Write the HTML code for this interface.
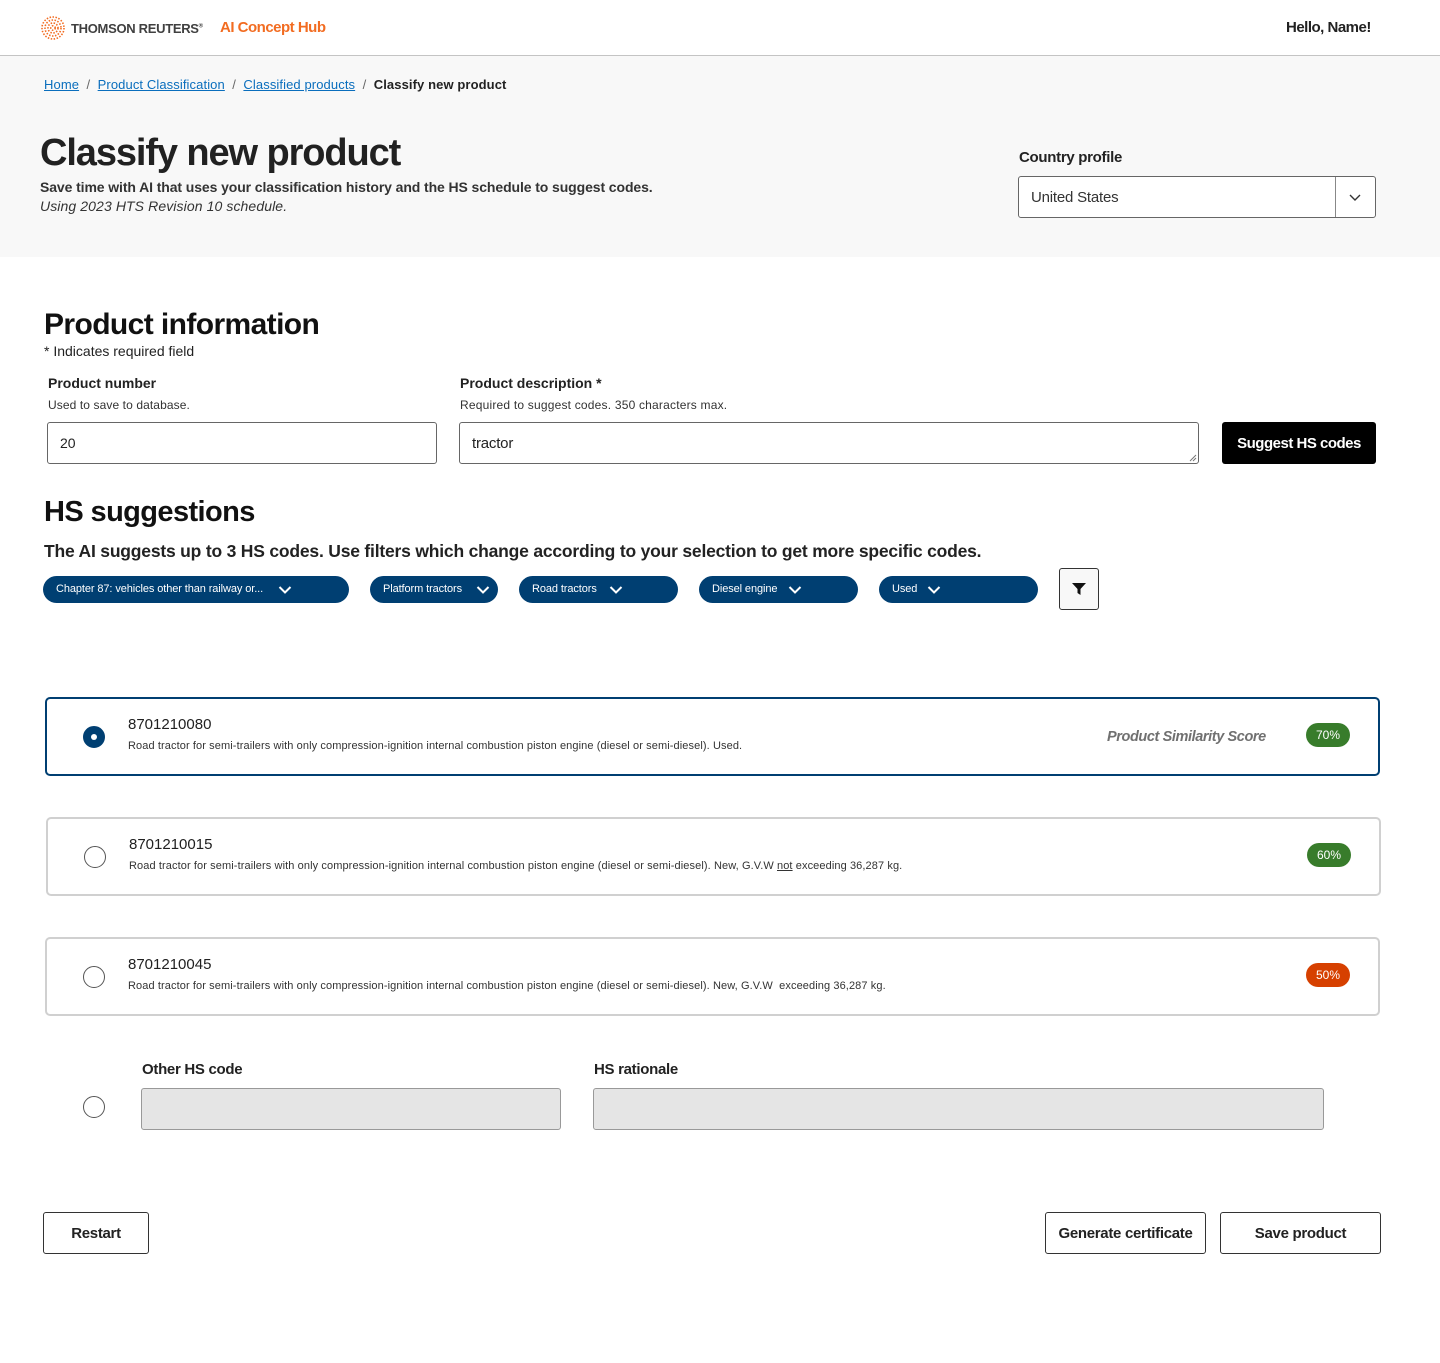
<!DOCTYPE html>
<html><head><meta charset="utf-8"><style>
*{box-sizing:border-box;margin:0;padding:0}
body{width:1440px;height:1363px;position:relative;background:#fff;font-family:"Liberation Sans",sans-serif;color:#212121;overflow:hidden}
.a{position:absolute;white-space:nowrap}
a{color:#0a6ebd;text-decoration:underline}
.pill{position:absolute;top:576px;height:27px;background:#003f72;border-radius:14px;color:#fff;font-size:11px;padding:7px 0 0 13px;letter-spacing:-0.1px}
.pill svg{position:absolute;top:9px}
.card{position:absolute;left:45px;width:1335px;height:79px;border:2px solid #d0d0d0;border-radius:5px;background:#fff}
.radio{position:absolute;width:22px;height:22px;border:1px solid #555;border-radius:50%;background:#fff}
.code{position:absolute;left:81px;top:17px;font-size:15px;color:#212121}
.desc{position:absolute;left:81px;top:41px;font-size:11px;color:#333;letter-spacing:0.1px}
.badge{position:absolute;top:24px;width:44px;height:24px;border-radius:12px;color:#fff;font-size:12px;text-align:center;line-height:24px}
.btn{position:absolute;height:42px;border:1px solid #333;border-radius:3px;background:#fff;font-size:15px;font-weight:bold;text-align:center;line-height:41px;color:#222;letter-spacing:-0.3px}
</style></head><body>
<div class="a" style="left:0;top:0;width:1440px;height:56px;border-bottom:1px solid #c4c4c4;background:#fff"></div>
<svg class="a" style="left:40px;top:16px" width="26" height="24" viewBox="0 0 26 24">
<g fill="none" stroke="#f26c21" stroke-width="1.6" stroke-dasharray="1.5 1.5">
<circle cx="13" cy="12" r="11"/><circle cx="13" cy="12" r="8"/><circle cx="13" cy="12" r="5"/><circle cx="13" cy="12" r="2.2"/></g></svg>
<div class="a" style="left:71px;top:21px;font-size:13px;font-weight:bold;color:#404040;letter-spacing:-0.3px">THOMSON REUTERS<sup style="font-size:6px">®</sup></div>
<div class="a" style="left:220px;top:19px;font-size:15px;font-weight:bold;color:#f26c21;letter-spacing:-0.5px">AI Concept Hub</div>
<div class="a" style="left:1286px;top:19px;font-size:15px;font-weight:bold;color:#222;letter-spacing:-0.5px">Hello, Name!</div>
<div class="a" style="left:0;top:56px;width:1440px;height:201px;background:#f8f8f8"></div>
<div class="a" style="left:44px;top:77px;font-size:13px;color:#666;letter-spacing:0.1px"><a>Home</a> &nbsp;/&nbsp; <a>Product Classification</a> &nbsp;/&nbsp; <a>Classified products</a> &nbsp;/&nbsp; <span style="color:#222;font-weight:bold">Classify new product</span></div>
<div class="a" style="left:40px;top:132px;font-size:38px;font-weight:bold;color:#212121;letter-spacing:-1.1px">Classify new product</div>
<div class="a" style="left:40px;top:179px;font-size:14px;font-weight:bold;color:#333;letter-spacing:-0.1px">Save time with AI that uses your classification history and the HS schedule to suggest codes.</div>
<div class="a" style="left:40px;top:198px;font-size:14px;font-style:italic;color:#333;letter-spacing:0.1px">Using 2023 HTS Revision 10 schedule.</div>
<div class="a" style="left:1019px;top:149px;font-size:15px;font-weight:bold;color:#222;letter-spacing:-0.3px">Country profile</div>
<div class="a" style="left:1018px;top:176px;width:358px;height:42px;border:1px solid #666;border-radius:3px;background:#fff"></div>
<div class="a" style="left:1335px;top:177px;width:1px;height:40px;background:#888"></div>
<div class="a" style="left:1031px;top:189px;font-size:15px;color:#333;letter-spacing:-0.2px">United States</div>
<svg class="a" style="left:1349px;top:192px" width="12" height="10"><path d="M1 3l5 5 5-5" fill="none" stroke="#333" stroke-width="1.4"/></svg>
<div class="a" style="left:44px;top:308px;font-size:30px;font-weight:bold;color:#111;letter-spacing:-0.6px">Product information</div>
<div class="a" style="left:44px;top:343px;font-size:14px;color:#222;letter-spacing:0px">* Indicates required field</div>
<div class="a" style="left:48px;top:375px;font-size:14px;font-weight:bold;color:#222;letter-spacing:0px">Product number</div>
<div class="a" style="left:48px;top:398px;font-size:12px;color:#333;letter-spacing:0.1px">Used to save to database.</div>
<div class="a" style="left:47px;top:422px;width:390px;height:42px;border:1px solid #666;border-radius:3px"></div>
<div class="a" style="left:60px;top:435px;font-size:14px;color:#222">20</div>
<div class="a" style="left:460px;top:375px;font-size:14px;font-weight:bold;color:#222;letter-spacing:0px">Product description *</div>
<div class="a" style="left:460px;top:398px;font-size:12px;color:#333;letter-spacing:0.2px">Required to suggest codes. 350 characters max.</div>
<div class="a" style="left:459px;top:422px;width:740px;height:42px;border:1px solid #666;border-radius:3px"></div>
<svg class="a" style="left:1189px;top:454px" width="8" height="8"><path d="M7 1L1 7M7 4L4 7" stroke="#777" stroke-width="1"/></svg>
<div class="a" style="left:472px;top:435px;font-size:15px;color:#222;letter-spacing:-0.2px">tractor</div>
<div class="a" style="left:1222px;top:422px;width:154px;height:42px;background:#000;border-radius:3px;color:#fff;font-size:15px;font-weight:bold;text-align:center;line-height:43px;letter-spacing:-0.5px">Suggest HS codes</div>
<div class="a" style="left:44px;top:496px;font-size:29px;font-weight:bold;color:#111;letter-spacing:-0.6px">HS suggestions</div>
<div class="a" style="left:44px;top:541px;font-size:17.5px;font-weight:bold;color:#222;letter-spacing:-0.2px">The AI suggests up to 3 HS codes. Use filters which change according to your selection to get more specific codes.</div>
<div class="pill" style="left:43px;width:306px">Chapter 87: vehicles other than railway or...<svg style="left:235px" width="14" height="10"><path d="M1.5 2l5.5 5.5 5.5-5.5" fill="none" stroke="#fff" stroke-width="2"/></svg></div>
<div class="pill" style="left:370px;width:128px">Platform tractors<svg style="left:106px" width="14" height="10"><path d="M1.5 2l5.5 5.5 5.5-5.5" fill="none" stroke="#fff" stroke-width="2"/></svg></div>
<div class="pill" style="left:519px;width:159px">Road tractors<svg style="left:90px" width="14" height="10"><path d="M1.5 2l5.5 5.5 5.5-5.5" fill="none" stroke="#fff" stroke-width="2"/></svg></div>
<div class="pill" style="left:699px;width:159px">Diesel engine<svg style="left:89px" width="14" height="10"><path d="M1.5 2l5.5 5.5 5.5-5.5" fill="none" stroke="#fff" stroke-width="2"/></svg></div>
<div class="pill" style="left:879px;width:159px">Used<svg style="left:48px" width="14" height="10"><path d="M1.5 2l5.5 5.5 5.5-5.5" fill="none" stroke="#fff" stroke-width="2"/></svg></div>
<div class="a" style="left:1059px;top:568px;width:40px;height:42px;border:1px solid #333;border-radius:3px;background:#f8f8f8"></div>
<svg class="a" style="left:1071px;top:582px" width="16" height="14"><path d="M1 1h14l-5.5 6v6l-3-2V7z" fill="#111"/></svg>
<div class="card" style="top:697px;border-color:#003f72">
 <div class="radio" style="left:36px;top:27px;background:#003f72;border-color:#003f72"><div style="position:absolute;left:7px;top:7px;width:6px;height:6px;border-radius:50%;background:#fff"></div></div>
 <div class="code">8701210080</div>
 <div class="desc">Road tractor for semi-trailers with only compression-ignition internal combustion piston engine (diesel or semi-diesel). Used.</div>
 <div class="a" style="left:1060px;top:30px;font-size:14.5px;font-style:italic;font-weight:bold;color:#707070;letter-spacing:-0.4px">Product Similarity Score</div>
 <div class="badge" style="left:1259px;background:#387c2b">70%</div>
</div>
<div class="card" style="top:817px;left:46px">
 <div class="radio" style="left:36px;top:27px"></div>
 <div class="code">8701210015</div>
 <div class="desc">Road tractor for semi-trailers with only compression-ignition internal combustion piston engine (diesel or semi-diesel). New, G.V.W <u>not</u> exceeding 36,287 kg.</div>
 <div class="badge" style="left:1259px;background:#387c2b">60%</div>
</div>
<div class="card" style="top:937px">
 <div class="radio" style="left:36px;top:27px"></div>
 <div class="code">8701210045</div>
 <div class="desc">Road tractor for semi-trailers with only compression-ignition internal combustion piston engine (diesel or semi-diesel). New, G.V.W &nbsp;exceeding 36,287 kg.</div>
 <div class="badge" style="left:1259px;background:#d64000">50%</div>
</div>
<div class="radio" style="left:83px;top:1096px"></div>
<div class="a" style="left:142px;top:1061px;font-size:15px;font-weight:bold;color:#222;letter-spacing:-0.3px">Other HS code</div>
<div class="a" style="left:141px;top:1088px;width:420px;height:42px;background:#e5e5e5;border:1px solid #999;border-radius:3px"></div>
<div class="a" style="left:594px;top:1061px;font-size:15px;font-weight:bold;color:#222;letter-spacing:-0.3px">HS rationale</div>
<div class="a" style="left:593px;top:1088px;width:731px;height:42px;background:#e5e5e5;border:1px solid #999;border-radius:3px"></div>
<div class="btn" style="left:43px;top:1212px;width:106px">Restart</div>
<div class="btn" style="left:1045px;top:1212px;width:161px">Generate certificate</div>
<div class="btn" style="left:1220px;top:1212px;width:161px">Save product</div>
</body></html>
